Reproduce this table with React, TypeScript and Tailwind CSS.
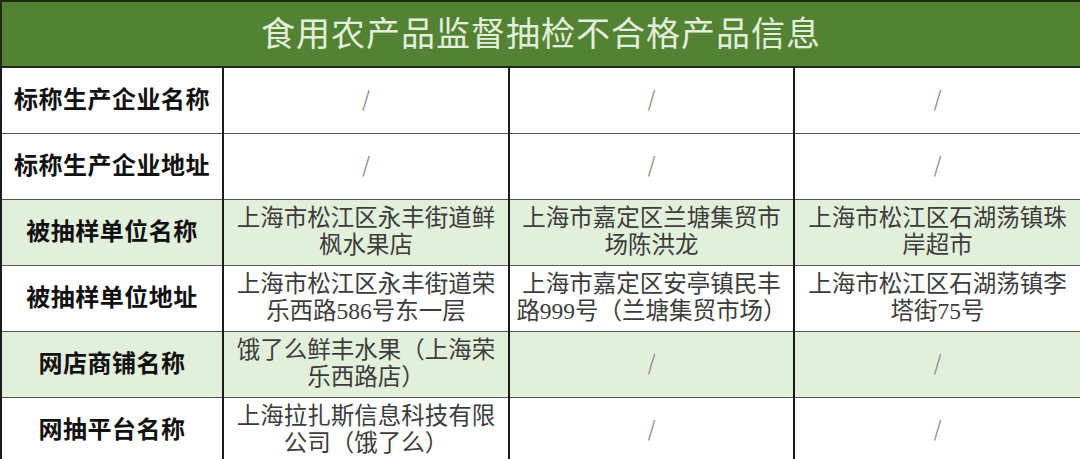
import React from 'react';

type Row = {
  label: string;
  green?: boolean;
  cells: string[][];
};

const ROWS: Row[] = [
  { label: '标称生产企业名称', cells: [['/'], ['/'], ['/']] },
  { label: '标称生产企业地址', cells: [['/'], ['/'], ['/']] },
  {
    label: '被抽样单位名称',
    green: true,
    cells: [
      ['上海市松江区永丰街道鲜', '枫水果店'],
      ['上海市嘉定区兰塘集贸市', '场陈洪龙'],
      ['上海市松江区石湖荡镇珠', '岸超市'],
    ],
  },
  {
    label: '被抽样单位地址',
    cells: [
      ['上海市松江区永丰街道荣', '乐西路586号东一层'],
      ['上海市嘉定区安亭镇民丰', '路999号（兰塘集贸市场）'],
      ['上海市松江区石湖荡镇李', '塔街75号'],
    ],
  },
  {
    label: '网店商铺名称',
    green: true,
    cells: [['饿了么鲜丰水果（上海荣', '乐西路店）'], ['/'], ['/']],
  },
  {
    label: '网抽平台名称',
    cells: [['上海拉扎斯信息科技有限', '公司（饿了么）'], ['/'], ['/']],
  },
];

const FONT = "font-['Liberation_Serif','Noto_Sans_CJK_SC',serif]";

export default function App() {
  return (
    <div className={`w-[1080px] h-[459px] overflow-hidden bg-white ${FONT}`}>
      <table className="w-full table-fixed border-collapse">
        <colgroup>
          <col className="w-[222px]" />
          <col className="w-[286px]" />
          <col className="w-[285px]" />
          <col className="w-[287px]" />
        </colgroup>
        <thead>
          <tr className="h-[66px]">
            <th
              colSpan={4}
              className="border-2 border-[#1e2a16] bg-[#548235] text-center text-[34px] font-normal tracking-[1px] text-[#e2efda]"
            >
              食用农产品监督抽检不合格产品信息
            </th>
          </tr>
        </thead>
        <tbody>
          {ROWS.map((r) => (
            <tr key={r.label} className={`h-[66px] ${r.green ? 'bg-[#e2efda]' : 'bg-white'}`}>
              <td className="border-x-2 border-y border-x-[#1a1a1a] border-y-[#555] px-0 text-center text-[24px] font-bold leading-[28px] tracking-[0.5px] text-[#111]">
                {r.label}
              </td>
              {r.cells.map((lines, i) => (
                <td
                  key={i}
                  className="border-x-2 border-y border-x-[#1a1a1a] border-y-[#555] px-0 text-center text-[23.5px] leading-[27px] text-[#3c3c3c]"
                >
                  {lines.length === 1 && lines[0] === '/' ? (
                    <span className="font-['DejaVu_Sans'] text-[24px] font-extralight text-[#888]">/</span>
                  ) : (
                    lines.map((l) => (
                      <div key={l} className="whitespace-nowrap">
                        {l}
                      </div>
                    ))
                  )}
                </td>
              ))}
            </tr>
          ))}
        </tbody>
      </table>
    </div>
  );
}
